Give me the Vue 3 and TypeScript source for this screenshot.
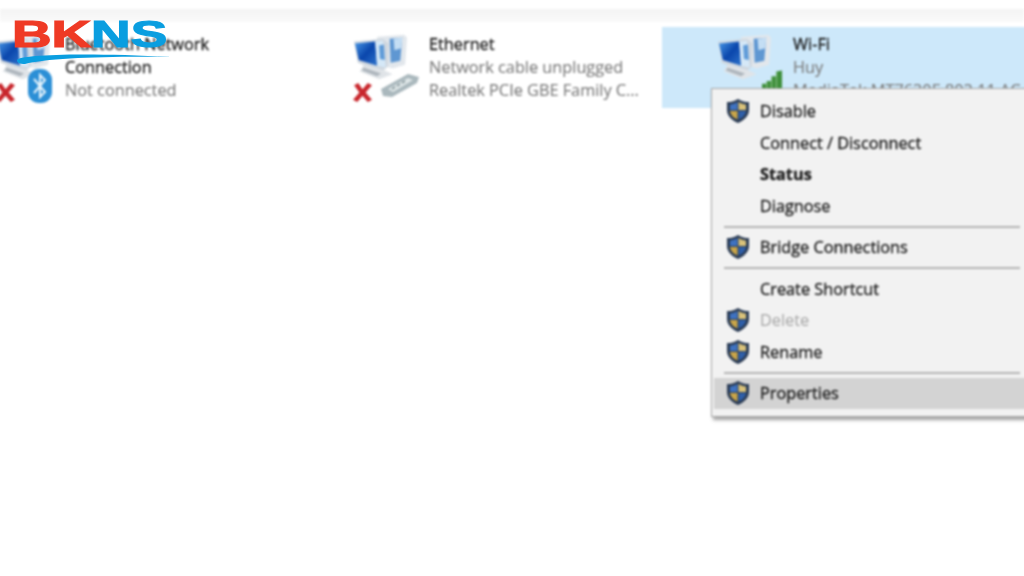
<script setup lang="ts">
interface MenuItem {
  label: string;
  shield?: boolean;
  bold?: boolean;
  disabled?: boolean;
  active?: boolean;
  sep?: boolean; // separator below the row
}

const menu: MenuItem[] = [
  { label: 'Disable', shield: true },
  { label: 'Connect / Disconnect' },
  { label: 'Status', bold: true },
  { label: 'Diagnose', sep: true },
  { label: 'Bridge Connections', shield: true, sep: true },
  { label: 'Create Shortcut' },
  { label: 'Delete', shield: true, disabled: true },
  { label: 'Rename', shield: true, sep: true },
  { label: 'Properties', shield: true, active: true },
];
</script>

<template>
  <div class="page">
    <svg class="defs" width="0" height="0" aria-hidden="true">
      <defs>
        <linearGradient id="screen" x1="0" y1="0" x2="1" y2="1">
          <stop offset="0" stop-color="#4a98e6" />
          <stop offset="0.5" stop-color="#0a46ac" />
          <stop offset="1" stop-color="#2f74cc" />
        </linearGradient>
        <symbol id="pcs" viewBox="0 0 56 46">
          <!-- back monitor -->
          <path d="M24 2 L52 0 L55 3 L53 31 L40 35 L24 30 Z" fill="#e2e7ec" />
          <path d="M37 4 L50 3 L48 27 L38 29 Z" fill="#5f97d2" />
          <path d="M41 4 L50 3 L49 14 L42 16 Z" fill="#c4def4" />
          <!-- front monitor -->
          <path d="M0 7 L30 4 L36 9 L35 33 L29 38 L4 29 Z" fill="#cfd7df" />
          <path d="M1 9 L22 7 L24 32 L5 26 Z" fill="url(#screen)" />
          <path d="M22 7 L30 6 L33 34 L24 32 Z" fill="#d5e8f7" />
          <path d="M26 11 L31 10 L32 26 L27 25 Z" fill="#5f9bd8" />
          <!-- stand -->
          <path d="M10 31 L32 37 L40 41 L26 46 L6 38 Z" fill="#e0e4e8" />
          <path d="M10 34 L28 40 L24 43 L8 37 Z" fill="#aeb6bd" />
        </symbol>
        <symbol id="cross" viewBox="0 0 20 20">
          <path d="M2 3 L6 1 L10 7 L15 1 L19 3 L13 10 L19 17 L15 19 L10 13 L5 19 L1 17 L7 10 Z" fill="#c8262c" />
        </symbol>
        <symbol id="shield" viewBox="0 0 22 24">
          <path d="M11 0 C15 2.500 18 3 22 3 V11 C22 17 17 21.500 11 24 C5 21.500 0 17 0 11 V3 C4 3 7 2.500 11 0 Z" fill="#2b3c55" />
          <path d="M10.500 3 C8 4.500 5.500 5.300 3 5.500 V11 H10.500 Z" fill="#3f72c0" />
          <path d="M11.500 3 C14 4.500 16.500 5.300 19 5.500 V11 H11.500 Z" fill="#d9c27a" />
          <path d="M3 12 H10.500 V20.500 C6.500 19 3.500 16 3 12 Z" fill="#c9a54a" />
          <path d="M11.500 12 H19 C18.500 16 15.500 19 11.500 20.500 Z" fill="#2f5fa8" />
        </symbol>
      </defs>
    </svg>

    <div class="screen">
      <div class="band"></div>
      <div class="tiles">
        <div class="tile tile--bt">
          <div class="tile__icon">
            <svg class="pcs"><use href="#pcs" /></svg>
            <svg class="cross" viewBox="0 0 20 20"><use href="#cross" /></svg>
            <svg class="bt" viewBox="0 0 26 36">
              <rect x="1" y="1" width="24" height="34" rx="11" fill="#2b8fd6" />
              <path d="M7 11 L18 24 L13 29 V7 L18 12 L7 25" fill="none" stroke="#eaf5fc" stroke-width="2" />
            </svg>
          </div>
          <div class="tile__text">
            <div class="name">Bluetooth Network</div>
            <div class="name">Connection</div>
            <div class="sub">Not connected</div>
          </div>
        </div>

        <div class="tile tile--eth">
          <div class="tile__icon">
            <svg class="pcs"><use href="#pcs" /></svg>
            <svg class="cross" viewBox="0 0 20 20"><use href="#cross" /></svg>
            <svg class="plug" viewBox="0 0 40 26">
              <path d="M1 17 L28 2 L39 5 L37 11 L12 25 L3 24 Z" fill="#aab8bd" />
              <path d="M8 17 L28 6 L33 8 L13 20 Z" fill="#dfe7e8" />
              <path d="M12 17 L15 15 M17 14 L20 12 M22 11 L25 9" stroke="#6f7f86" stroke-width="1.500" />
            </svg>
          </div>
          <div class="tile__text">
            <div class="name">Ethernet</div>
            <div class="sub">Network cable unplugged</div>
            <div class="sub">Realtek PCIe GBE Family C...</div>
          </div>
        </div>

        <div class="tile tile--wifi">
          <div class="tile__icon">
            <svg class="pcs"><use href="#pcs" /></svg>
            <svg class="bars" viewBox="0 0 22 20">
              <path d="M0 20 V14 H5 V11 H10 V6 H15 V1 L21 0 V20 Z" fill="#3f8f3c" />
              <path d="M5 20 V12 M10 20 V7 M15 20 V2" stroke="#8fc58c" stroke-width="1" />
            </svg>
          </div>
          <div class="tile__text">
            <div class="name">Wi-Fi</div>
            <div class="sub">Huy</div>
            <div class="sub">MediaTek MT7630E 802.11 AC...</div>
          </div>
        </div>
      </div>

      <ul class="menu">
        <template v-for="item in menu" :key="item.label">
          <li
            class="menu__row"
            :class="{ 'is-bold': item.bold, 'is-off': item.disabled, 'is-on': item.active }"
          >
            <span class="menu__ico">
              <svg v-if="item.shield" class="shield" viewBox="0 0 22 24"><use href="#shield" /></svg>
            </span>
            {{ item.label }}
          </li>
          <li v-if="item.sep" class="menu__sep"></li>
        </template>
      </ul>
    </div>

    <div class="logo">
      <div class="logo__word"><span class="red">BK</span><span class="blue">NS</span></div>
      <svg class="logo__swoosh" viewBox="0 0 156 12">
        <path d="M0 7 C2 2 60 -1 156 4 C90 3 30 5 8 11 C3 11 0 10 0 7 Z" fill="#0a9ee0" />
      </svg>
    </div>
  </div>
</template>

<style scoped>
.page {
  position: relative;
  width: 1024px;
  height: 576px;
  overflow: hidden;
  background: #fff;
  font-family: "Open Sans", "Noto Sans", sans-serif;
}

.defs {
  position: absolute;
}

/* the reference is a soft, upscaled capture */
.screen {
  height: 100%;
  padding-top: 9px;
  box-sizing: border-box;
  filter: blur(0.8px);
}

.band {
  height: 13px;
  margin-bottom: 5px;
  background: linear-gradient(180deg, #f4f4f4, #fafafa);
}

.tiles {
  display: flex;
  gap: 4px;
  margin-left: -62px;
}

.tile {
  flex: 0 0 358px;
  height: 81px;
  display: flex;
  box-sizing: border-box;
  padding-top: 6px;
}

.tile--bt { padding-left: 57px; }
.tile--eth { padding-left: 52px; }
.tile--wifi {
  padding-left: 54px;
  background: #cde8fa;
}

.tile__icon {
  position: relative;
  width: 77px;
  flex: none;
}
.tile--bt .tile__icon { width: 70px; }

.pcs {
  position: absolute;
  left: 2px;
  top: 1px;
  width: 54px;
  height: 46px;
}

.cross {
  position: absolute;
  left: 0;
  top: 49px;
  width: 21px;
  height: 21px;
}

.bt {
  position: absolute;
  left: 32px;
  top: 35px;
  width: 26px;
  height: 36px;
}

.plug {
  position: absolute;
  left: 28px;
  top: 39px;
  width: 40px;
  height: 26px;
}

.bars {
  position: absolute;
  left: 46px;
  top: 37px;
  width: 21px;
  height: 20px;
}

.name,
.sub {
  font-size: 16.300px;
  line-height: 23px;
  white-space: nowrap;
}
.name { color: #1c1c1c; -webkit-text-stroke: 0.35px currentColor; }
.sub { color: #7c7c7c; -webkit-text-stroke: 0.15px currentColor; }

.menu {
  position: absolute;
  left: 711px;
  top: 88px;
  width: 330px;
  height: 329px;
  margin: 0;
  padding: 6.500px 2px 0;
  box-sizing: border-box;
  list-style: none;
  background: #f2f2f2;
  border: 1px solid #a6a6a6;
  box-shadow: 2px 3px 3px rgba(90, 90, 90, 0.55);
}

.menu__row {
  display: flex;
  align-items: center;
  height: 31.500px;
  color: #1c1c1c;
  font-size: 16.300px;
  white-space: nowrap;
  -webkit-text-stroke: 0.35px currentColor;
}
.menu__row.is-bold { font-weight: 700; }
.menu__row.is-off { color: #a5a5a5; -webkit-text-stroke: 0; }
.menu__row.is-on { background: #d3d3d3; }

.menu__ico {
  flex: none;
  width: 46px;
  display: flex;
  padding-left: 13px;
  box-sizing: border-box;
}

.shield {
  width: 22px;
  height: 24px;
}

.menu__sep {
  width: 296px;
  height: 2px;
  margin: 4px 0 4px 10px;
  background: #b4b4b4;
}

.logo {
  position: absolute;
  left: 12px;
  top: 16px;
}

.logo__word {
  font-family: "Liberation Sans", Arial, sans-serif;
  font-weight: 700;
  font-size: 37px;
  line-height: 37px;
  transform: scaleX(1.48);
  transform-origin: left top;
  -webkit-text-stroke: 1.200px currentColor;
  white-space: nowrap;
}
.red { color: #ef3a25; }
.blue { color: #0a9ee0; }

.logo__swoosh {
  display: block;
  width: 156px;
  height: 12px;
  margin: 0 0 0 5px;
}
</style>
